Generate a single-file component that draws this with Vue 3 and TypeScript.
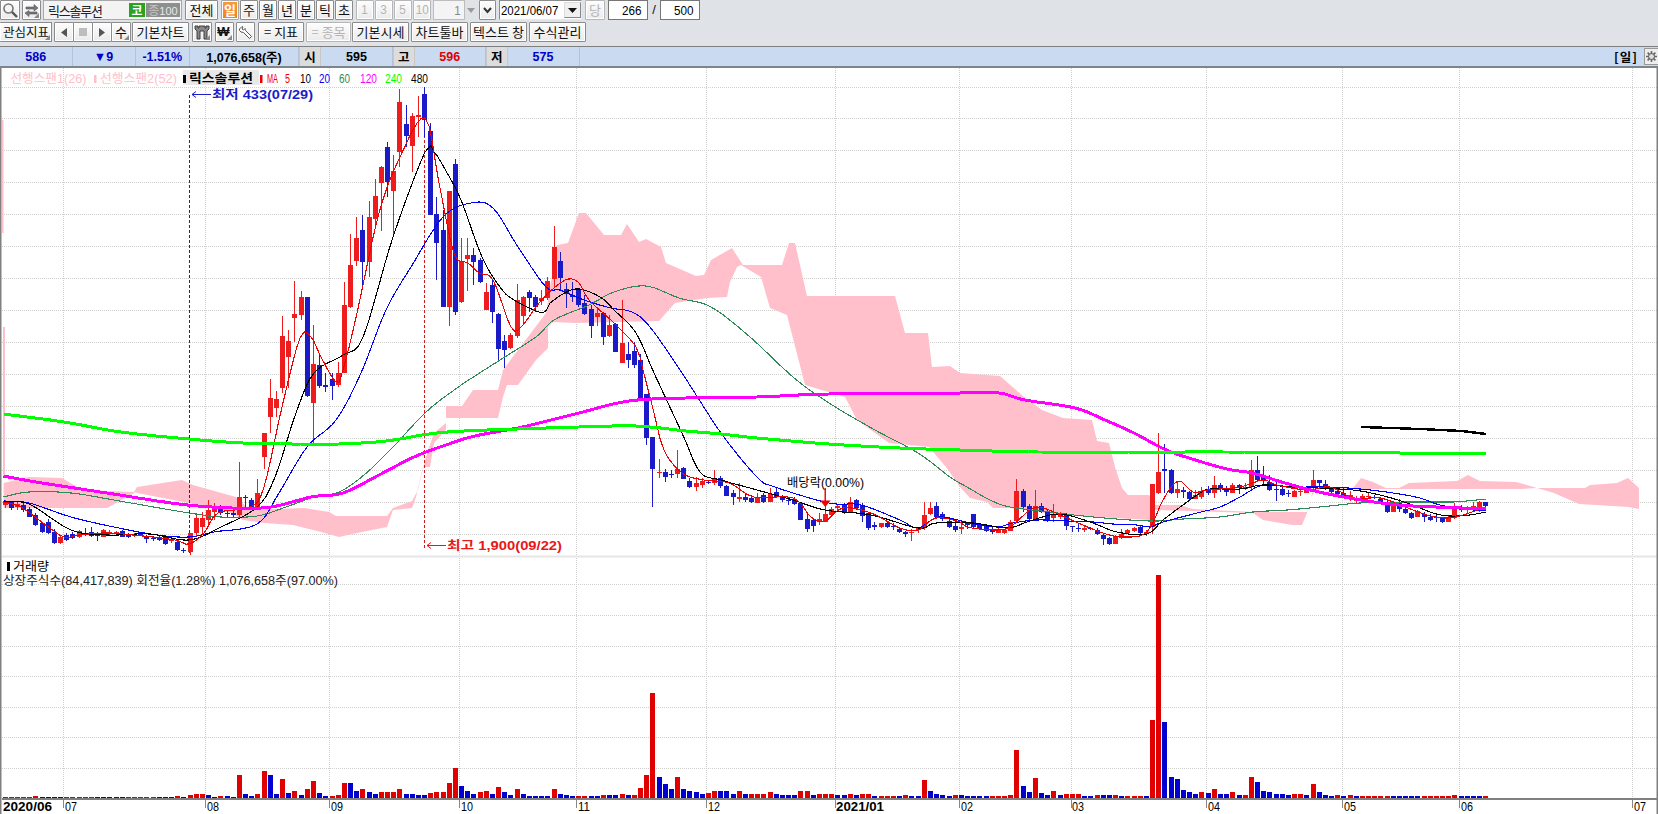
<script setup lang="ts">
type Row = [number, number, number, number, number]
const X = (i: number) => 4.5 + 6.17 * i

const seg1: Row[] = [
  [1,1262,1275,1260,1285],[0,1265,1285,1262,1290],[1,1272,1282,1265,1290],[0,1275,1290,1268,1297],[0,1288,1310,1280,1312],
  [0,1305,1335,1300,1338],[0,1330,1355,1325,1360],[0,1325,1358,1318,1362],[0,1355,1390,1348,1392],[1,1370,1390,1365,1392],
  [0,1365,1380,1360,1382],[0,1362,1375,1355,1378],[1,1353,1372,1350,1374],[0,1358,1362,1345,1368],[0,1355,1367,1342,1370],
  [0,1364,1367,1355,1382],[1,1350,1370,1348,1372],[1,1355,1362,1350,1365],[1,1355,1362,1352,1365],[0,1352,1370,1350,1372],
  [0,1365,1370,1360,1373],[1,1362,1367,1358,1370],[0,1358,1365,1355,1368],[0,1370,1377,1365,1390],[0,1374,1377,1368,1382],
  [0,1372,1380,1368,1383],[0,1368,1392,1365,1395],[1,1378,1383,1375,1390],[0,1385,1410,1378,1412],[0,1410,1413,1403,1420],
  [1,1360,1415,1358,1425],[1,1315,1360,1300,1370],[1,1315,1340,1295,1365],[1,1290,1320,1260,1340],[1,1282,1295,1270,1320],
  [0,1285,1300,1275,1305],[0,1298,1302,1290,1312],[0,1300,1305,1292,1312],[1,1252,1305,1145,1310],[0,1250,1254,1245,1290],
  [0,1260,1280,1255,1290],[1,1240,1280,1197,1285],[1,1060,1130,1060,1167],[1,955,1012,897,1060],[1,958,985,932,1010],
  [1,768,925,708,940],[1,783,832,750,925],[1,702,713,603,785],[1,651,705,633,720],[0,651,948,651,950],
  [1,853,968,735,1088],[0,855,917,822,925],[0,915,922,880,935],[0,897,917,880,960],[1,880,915,847,920],
  [1,675,880,605,880],[1,556,680,462,685],[1,474,543,410,558],[0,450,545,405,618],[1,411,545,363,590],
  [1,348,416,297,440],[1,261,308,258,452],[0,201,305,186,350],[1,273,333,225,465],[1,66,215,27,260],
  [0,132,168,76,200],[1,108,197,100,276],[1,105,110,48,170],[0,42,120,20,170],[0,153,405,130,405],
  [0,403,488,350,600],[0,450,680,390,680],[1,333,680,333,738],[0,252,695,238,705],[1,543,665,475,670],
  [1,525,537,475,633],[0,525,545,505,615],[0,540,605,535,610],[1,637,690,610,690],[0,615,695,600,728],
  [0,702,806,700,840],[0,783,810,765,865],[1,765,803,760,806],[1,660,767,612,775],[1,650,708,648,735],
  [0,637,653,630,695],[0,650,680,645,695],[1,655,663,630,675],[1,604,655,590,660],[1,501,598,438,620]
]
const seg2: Row[] = [
  [0,183,235,155,270],[0,268,282,250,325],[0,285,290,245,305],[0,270,315,265,320],[0,310,342,285,345],
  [0,327,378,315,415],[1,339,350,320,378],[0,339,410,335,435],[1,375,408,345,410],[0,373,455,370,455],
  [1,430,488,300,488],[0,463,480,425,505],[0,453,495,425,505],[0,480,595,462,595],[0,583,713,583,735],
  [0,710,806,710,920],[1,816,820,777,833],[0,816,830,808,845],[0,821,824,810,835],[1,808,823,750,835],
  [0,803,836,800,838],[0,842,862,835,865],[1,849,860,832,872],[1,842,854,835,865],[0,846,850,840,853],
  [1,837,848,810,855],[0,835,858,828,865],[0,858,888,855,888],[0,878,890,870,915],[1,891,897,850,905],
  [0,892,900,880,905],[0,895,905,885,908],[1,892,908,878,910],[0,885,905,880,910],[1,883,905,865,905],
  [0,876,890,862,893],[0,890,900,885,905],[0,900,903,893,915],[0,898,912,890,915],[0,910,960,905,960],
  [0,958,986,940,995],[0,960,978,955,995],[1,958,965,940,975],[1,942,965,865,965],[1,928,945,920,950],
  [1,918,923,912,935],[0,915,938,910,942],[1,905,935,890,938],[0,900,925,898,930],[0,915,947,910,965],
  [0,940,983,935,990],[0,975,980,965,990],[1,970,982,968,985],[0,968,982,965,985],[0,978,982,970,990],
  [0,987,995,985,998],[0,995,1002,992,1010],[1,997,1000,988,1022],[1,985,990,980,1000],[1,945,985,905,990],
  [1,925,942,905,945],[0,918,950,905,955],[0,943,958,935,962],[0,962,980,960,985],[0,978,990,960,997]
]
const seg3: Row[] = [
  [1,291,296,275,312],[0,278,285,275,297],[0,252,290,252,295],[0,283,297,280,300],[0,287,303,283,305],
  [0,300,307,290,312],[1,297,308,293,310],[1,300,310,298,312],[1,276,302,270,303],[1,183,272,147,275],
  [0,183,232,178,245],[0,228,268,222,270],[1,228,268,180,270],[0,228,247,218,250],[0,246,272,240,275],
  [1,255,265,222,275],[1,255,262,245,268],[0,255,288,250,300],[0,288,292,288,305],[0,295,298,283,305],
  [1,293,300,285,305],[0,295,298,290,300],[0,300,312,295,316],[0,315,327,310,345],[0,323,343,320,345],
  [1,318,342,315,342],[1,312,325,296,328],[1,300,310,298,312],[1,294,303,290,305],[0,291,308,285,318],
  [1,305,313,300,318],[1,162,290,162,312],[1,126,190,8,192],[0,118,122,42,190],[0,120,190,116,192],
  [1,177,188,152,205],[0,180,186,172,205],[0,186,208,182,210],[1,196,206,180,208],[1,183,200,170,208],
  [0,177,190,168,195],[1,165,190,138,203],[0,165,178,160,185],[0,175,187,168,197],
  [1,166,188,158,190],[0,166,175,162,192],[1,172,176,160,180],[1,120,170,90,180],[0,120,150,78,152],
  [0,138,150,108,165],[0,155,180,135,182],[0,177,180,150,213],[0,177,195,168,198],[0,188,193,180,201],
  [1,183,200,180,202],[1,183,187,170,198],[1,178,188,170,190],[1,150,175,120,180],[0,150,158,150,177],
  [0,162,175,150,180],[0,178,185,172,190],[0,183,192,175,195],[0,188,198,175,200],[1,195,201,182,213],
  [1,204,213,198,220],[1,197,205,192,210],[1,197,202,190,207],[0,200,205,195,208],[0,206,216,200,220],
  [0,218,245,214,249],[1,226,246,214,247],[0,216,238,208,246],[0,236,250,232,252],[0,249,263,246,266],
  [1,244,260,240,262],[0,251,262,246,275],[0,260,270,252,272],[0,262,265,256,276],[0,263,275,260,278],
  [1,263,275,256,277],[1,233,265,220,267],[0,238,241,226,247],[1,238,241,228,250],[1,228,240,215,246],
  [1,216,233,213,246],[0,216,228,215,242]
]
const convert = (base: number, rows: Row[]) =>
  rows.map((r) => ({ up: r[0] === 1, top: base + r[1] / 3, bot: base + r[2] / 3, wt: base + r[3] / 3, wb: base + r[4] / 3 }))
const candles = [...convert(80, seg1), ...convert(200, seg2), ...convert(430, seg3)].map((c, i) => ({
  ...c,
  x: Math.round(X(i)),
  h: Math.max(1, c.bot - c.top),
  wh: Math.max(1, c.wb - c.wt)
}))

const vols: number[] = [
  1,1,1,1,1,2,1,1,1,1,1,1,1,1,1,1,1,1,1,1,1,1,1,1,1,1,1,1,2,1,
  3,4,4,3,1,2,2,1,23,4,2,4,27,23,4,19,5,7,3,9,17,5,2,2,3,15,15,7,9,6,
  4,6,6,6,9,4,4,3,3,5,6,6,15,30,12,7,4,6,7,4,11,6,3,9,4,2,2,2,2,9,
  4,3,2,2,2,2,2,3,3,3,4,3,3,10,23,105,21,14,9,21,9,7,6,4,5,7,7,7,4,7,
  4,4,4,4,6,4,3,3,3,7,7,3,4,4,4,3,3,4,3,4,4,2,2,2,2,2,3,2,2,18,
  7,4,3,2,3,3,2,2,2,2,2,2,2,3,48,12,6,20,5,3,7,3,4,4,4,2,2,3,3,3,
  3,2,2,2,2,2,78,223,76,21,19,8,6,4,6,5,9,4,4,6,3,3,21,16,7,6,4,4,3,4,
  4,3,14,6,3,2,3,2,3,2,2,2,2,2,2,2,2,2,2,2,2,2,2,2,2,3,2,2,2,2,2
]
const volBars = vols.map((v, i) => {
  const prev = i ? vols[i - 1] : 0
  const up = v > prev ? true : v < prev ? false : Math.floor(i / 5) % 2 === 0
  return { x: Math.round(X(i)) - 2, y: 798 - v, h: v, up }
})

const hGrid = [...Array.from({ length: 15 }, (_, k) => 86.5 + 31.93 * k), 584, 614.5, 645.5, 675.5, 706.5, 736.5, 767.5].map((y) => Math.round(y) + 0.5)
const vGrid = [63.5, 205.5, 329.5, 459.5, 576.5, 706.5, 835.5, 959.5, 1071.5, 1206.5, 1342.5, 1459.5, 1632.5]
const axisLabels = [
  { t: '2020/06', x: 3, w: 49, bold: true },
  { t: '07', x: 65, w: 12 }, { t: '08', x: 207, w: 12 }, { t: '09', x: 331, w: 12 },
  { t: '10', x: 461, w: 12 }, { t: '11', x: 578, w: 12 }, { t: '12', x: 708, w: 12 },
  { t: '2021/01', x: 836, w: 48, bold: true },
  { t: '02', x: 961, w: 12 }, { t: '03', x: 1072, w: 12 }, { t: '04', x: 1208, w: 12 },
  { t: '05', x: 1344, w: 12 }, { t: '06', x: 1461, w: 12 }, { t: '07', x: 1634, w: 12 }
]
const maLegend = [
  { t: 'MA', x: 267, w: 11, c: '#f00000' }, { t: '5', x: 285, w: 5, c: '#f00000' },
  { t: '10', x: 300, w: 11, c: '#000000' }, { t: '20', x: 319, w: 11, c: '#0000ff' },
  { t: '60', x: 339, w: 11, c: '#2e8b57' }, { t: '120', x: 360, w: 17, c: '#ff00ff' },
  { t: '240', x: 385, w: 17, c: '#00ff00' }, { t: '480', x: 411, w: 17, c: '#000000' }
]

const cloudU = '3.6,483 29,477 62,478 82,490 134,492 137,487 182,480 193,485 218,492 236,497 250,510 304,508 329,512 336,516 387,516 393,508 412,501 418,490 425,460 434,433 446,423 446,406 462,406 473,390 498,390 503,370 518,350 546,313 557,245 568,243 579,213 586,213 604,235 621,235 627,224 639,242 646,239 661,247 666,263 696,276 704,275 711,260 732,248 743,265 782,265 789,243 795,243 807,296 895,296 905,333 928,333 932,367 950,366 960,373 1000,376 1025,398 1042,410 1063,418 1092,420 1097,441 1109,443 1115,467 1122,488 1128,495 1149,495 1155,505 1180,505 1193,509 1253,512 1307,512 1311,497 1317,489 1353,488 1361,478 1373,482 1386,488 1399,488 1409,483 1457,481 1468,475 1480,481 1516,482 1537,488 1585,488 1590,485 1617,483 1628,478 1639,488 1639,508'
const cloudL = '3.6,508 107,508 125,498 136,492 137,493 189,503 232,513 243,520 264,523 293,525 321,532 339,537 357,533 387,527 393,510 412,508 416,497 423,467 430,467 434,443 446,430 446,418 498,418 503,397 507,385 518,385 536,360 548,348 548,327 553,322 575,323 659,321 675,303 707,298 727,297 730,282 737,267 741,265 761,277 770,308 787,315 805,385 845,397 857,420 889,443 929,447 946,467 960,487 970,498 987,502 993,508 1010,508 1060,515 1150,520 1155,510 1190,511 1253,513 1263,520 1292,525 1302,525 1307,513 1312,493 1317,489 1520,489 1537,488 1554,493 1579,504 1629,507 1639,509'
const cloud = cloudU + ' ' + cloudL.split(' ').reverse().join(' ')

function smooth(src: string): string {
  const p = src.split(' ').map((s) => s.split(',').map(Number))
  const out: string[] = []
  for (let i = 0; i < p.length - 1; i++) {
    const a = p[Math.max(0, i - 1)]
    const b = p[i]
    const c = p[i + 1]
    const d = p[Math.min(p.length - 1, i + 2)]
    const steps = Math.max(2, Math.round((c[0] - b[0]) / 4))
    for (let s = 0; s < steps; s++) {
      const t = s / steps
      const q = (k: number) =>
        0.5 * (2 * b[k] + (c[k] - a[k]) * t + (2 * a[k] - 5 * b[k] + 4 * c[k] - d[k]) * t * t + (3 * b[k] - a[k] - 3 * c[k] + d[k]) * t * t * t)
      out.push(q(0).toFixed(1) + ',' + q(1).toFixed(1))
    }
  }
  out.push(p[p.length - 1].join(','))
  return out.join(' ')
}

const ma5 = smooth('3.6,502 21,507 43,523 64,537 79,535 107,533 143,536 175,540 189,544 204,533 218,513 250,507 264,487 282,407 300,338 311,337 321,357 336,382 343,370 357,313 379,213 400,157 425,118 439,183 454,253 468,263 479,273 493,280 511,327 521,327 539,303 554,288 568,279 579,283 589,300 614,323 636,347 643,370 654,413 664,450 682,473 704,480 729,483 754,497 793,498 811,517 825,521 843,508 871,513 900,528 918,530 936,518 960,522 967,527 993,530 1010,527 1030,510 1043,508 1067,518 1083,525 1103,533 1123,537 1147,532 1163,500 1178,481 1193,492 1207,490 1240,487 1263,480 1277,485 1307,490 1330,487 1353,498 1380,498 1400,505 1427,515 1447,518 1463,515 1486,507')
const ma10 = smooth('3.6,502 29,504 71,530 107,535 150,534 189,540 221,527 257,507 275,477 296,413 314,373 343,355 363,337 393,237 425,152 434,152 446,171 461,200 482,257 500,287 514,300 543,313 550,303 575,289 600,297 614,310 636,333 654,373 682,433 700,472 721,480 757,490 793,500 825,510 871,515 918,528 936,523 973,523 1007,528 1027,522 1050,515 1067,515 1093,523 1117,532 1147,534 1163,520 1183,505 1200,493 1210,489 1240,489 1263,485 1293,487 1317,488 1353,490 1380,495 1407,503 1433,513 1450,516 1470,515 1486,512')
const ma20 = smooth('3.6,501 29,503 71,517 114,527 157,535 189,537 214,532 257,524 279,493 307,447 336,420 361,373 386,310 411,267 443,217 471,203 493,208 518,247 546,287 560,290 584,300 611,308 632,312 650,327 682,373 721,433 757,477 775,487 829,503 861,505 900,520 918,528 939,517 970,523 997,527 1013,523 1037,520 1067,521 1093,522 1113,524 1137,525 1150,527 1163,522 1197,513 1220,507 1240,497 1263,485 1293,487 1327,487 1360,489 1393,493 1420,498 1440,505 1473,510 1486,510')
const ma60 = smooth('3.6,497 29,492 71,493 125,502 189,513 221,517 257,516 286,507 314,497 339,492 364,475 393,447 425,413 457,388 500,360 536,337 554,320 589,305 614,292 646,286 679,298 711,307 750,337 793,377 829,403 875,430 918,453 950,477 967,487 990,500 1010,507 1050,512 1083,516 1130,520 1157,521 1183,519 1220,517 1253,512 1287,510 1320,507 1360,503 1407,502 1453,502 1467,501 1486,499')
const ma120 = smooth('3.6,476 36,482 107,493 179,504 232,508 271,507 311,497 343,493 379,475 414,457 446,445 475,436 518,428 543,422 579,413 629,401 686,398 757,397 829,394 960,393 999,393 1025,400 1075,408 1105,420 1134,433 1164,449 1189,458 1227,469 1252,473 1285,483 1319,492 1361,500 1399,505 1436,507 1486,509')
const ma240 = smooth('3.6,414 64,422 121,432 189,439 243,443 296,444 339,444 386,441 429,434 464,431 518,429 579,427 636,426 686,431 721,434 757,438 829,444 900,448 960,450 1038,452 1155,452 1235,452 1409,453 1486,453')
const ma480 = '1361,427 1420,429 1462,431 1486,434'

const periods = ['주', '월', '년', '분', '틱', '초']
const minutes = ['1', '3', '5', '10']
const infoCells = [
  { t: '586', w: 72.5, c: 'blue' },
  { t: '▼9', w: 63, c: 'blue' },
  { t: '-1.51%', w: 54.5, c: 'blue' },
  { t: '1,076,658(주)', w: 109, c: 'black' },
  { t: '시', w: 22, c: 'label' },
  { t: '595', w: 72, c: 'black' },
  { t: '고', w: 21.5, c: 'label' },
  { t: '596', w: 71.5, c: 'red' },
  { t: '저', w: 21.5, c: 'label' },
  { t: '575', w: 72, c: 'blue' }
]
</script>

<template>
  <div class="screen">
    <header class="toolbar">
      <div class="row">
        <button class="btn w20">
          <svg width="16" height="16" viewBox="0 0 16 16"><circle cx="6.5" cy="6.5" r="4.5" fill="#f4f4f4" stroke="#777" stroke-width="1.6" /><path d="M10 10 L15 15" stroke="#555" stroke-width="2.4" /></svg>
        </button>
        <button class="btn w19 ml2 tri">
          <svg width="15" height="15" viewBox="0 0 15 15"><path d="M2 6 V4 H10 V1.5 L14 5 L10 8 V6 Z M13 9 V11 H5 V13.5 L1 10 L5 7.5 V9 Z" fill="#777" stroke="#555" stroke-width=".6" /></svg>
        </button>
        <div class="name ml2">
          <span class="name-text">릭스솔루션</span>
          <span class="badge-green">코</span>
          <span class="badge-gray"><span class="dim">종</span>100</span>
        </div>
        <button class="btn w33 ml3">전체</button>
        <button class="btn w18 ml3 on">일</button>
        <button v-for="p in periods" :key="p" class="btn w18 ml1">{{ p }}</button>
        <button v-for="(m, i) in minutes" :key="m" class="btn w18 off" :class="i === 0 ? 'ml3' : 'ml1'"><span class="num">{{ m }}</span></button>
        <div class="spin ml2">
          <span class="spin-val"><span class="num">1</span></span>
          <span class="spin-btn"><svg width="8" height="5" viewBox="0 0 8 5"><path d="M0 0 H8 L4 5 Z" fill="#999" /></svg></span>
        </div>
        <button class="btn w17 ml2">
          <svg width="9" height="7" viewBox="0 0 9 7"><path d="M1 1 L4.5 5 L8 1" fill="none" stroke="#333" stroke-width="2" /></svg>
        </button>
        <div class="date ml3">
          <span class="date-text">2021/06/07</span>
          <span class="date-btn"><svg width="9" height="5" viewBox="0 0 9 5"><path d="M0 0 H9 L4.5 5 Z" fill="#111" /></svg></span>
        </div>
        <button class="btn w20 ml3 off">당</button>
        <div class="count ml3"><span class="num">266</span></div>
        <span class="slash">/</span>
        <div class="count"><span class="num">500</span></div>
      </div>
      <div class="row row2">
        <button class="btn w52 clip tri">관심지표</button>
        <div class="group ml2">
          <button class="btn w19 joined"><svg width="6" height="9" viewBox="0 0 6 9"><path d="M6 0 V9 L0 4.5 Z" fill="#555" /></svg></button>
          <button class="btn w19 joined"><svg width="8" height="8" viewBox="0 0 8 8"><rect width="8" height="8" fill="#bdbdbd" /></svg></button>
          <button class="btn w19 joined"><svg width="6" height="9" viewBox="0 0 6 9"><path d="M0 0 V9 L6 4.5 Z" fill="#555" /></svg></button>
          <button class="btn w20 tri">수</button>
        </div>
        <button class="btn w57 ml1">기본차트</button>
        <button class="btn w20 ml3 tri">
          <svg width="16" height="15" viewBox="0 0 16 15"><path d="M1 1 H4 V3 H5 V1 H11 V3 H12 V1 H15 V4 L13 6 V14 H10 V6 H6 V14 H3 V6 L1 4 Z" fill="#888" stroke="#333" stroke-width=".9" /></svg>
        </button>
        <button class="btn w19 ml3 tri won">₩</button>
        <button class="btn w19 ml2">
          <svg width="15" height="15" viewBox="0 0 15 15"><path d="M1.5 4 L4 1.5 L5 2 L4 4 L5.5 5 L7 3.5 L7.5 5.5 L13.5 11.5 L11.5 13.5 L5.5 7.5 L3 7 L1.5 5.5 Z" fill="#fff" stroke="#555" stroke-width="1" /></svg>
        </button>
        <button class="btn w46 ml3"><span class="eq">=</span>지표</button>
        <button class="btn w45 ml2 off"><span class="eq">=</span>종목</button>
        <button class="btn w57 ml1">기본시세</button>
        <button class="btn w57 ml2">차트툴바</button>
        <button class="btn w57 ml2">텍스트 창</button>
        <button class="btn w57 ml2">수식관리</button>
      </div>
    </header>

    <section class="info">
      <div v-for="c in infoCells" :key="c.t" class="cell" :class="c.c" :style="{ width: c.w + 'px' }">{{ c.t }}</div>
      <div class="info-fill">
        <span class="period">[일]</span>
        <button class="gear">
          <svg width="13" height="13" viewBox="0 0 13 13"><g stroke="#666" stroke-width="1.6"><path d="M6.5 1 V12 M1 6.5 H12 M2.6 2.6 L10.4 10.4 M10.4 2.6 L2.6 10.4" /></g><circle cx="6.5" cy="6.5" r="3" fill="#ddd" stroke="#555" /></svg>
        </button>
      </div>
    </section>

    <svg class="chart" width="1658" height="746" viewBox="0 68 1658 746">
      <g class="grid">
        <line v-for="y in hGrid" :key="'h' + y" x1="2" x2="1657" :y1="y" :y2="y" />
        <line v-for="x in vGrid" :key="'v' + x" :x1="x" :x2="x" y1="68" y2="798" />
      </g>
      <line x1="2" x2="1657" y1="556.5" y2="556.5" stroke="#e6e6e6" stroke-width="2" />

      <rect x="2" y="120" width="1.5" height="113" fill="#ffc0cb" />
      <rect x="3" y="327" width="2" height="150" fill="#ffc0cb" />
      <polygon :points="cloud" fill="#ffc0cb" />

      <line x1="189.5" x2="189.5" y1="95" y2="555" stroke="#1c1cc8" stroke-dasharray="3 2" />
      <line x1="424.5" x2="424.5" y1="120" y2="548" stroke="#d01818" stroke-dasharray="3 2" />

      <g shape-rendering="crispEdges">
        <g v-for="(c, i) in candles" :key="i" :fill="c.up ? '#ee1c1c' : '#1a1ac8'">
          <rect :x="c.x" :y="c.wt" width="1" :height="c.wh" />
          <rect :x="c.x - 2" :y="c.top" width="5" :height="c.h" />
        </g>
      </g>

      <g fill="none" shape-rendering="crispEdges">
        <polyline :points="ma60" stroke="#2e8b57" stroke-width="1.1" />
        <polyline :points="ma20" stroke="#0000ff" stroke-width="1.1" />
        <polyline :points="ma10" stroke="#000" stroke-width="1.1" />
        <polyline :points="ma5" stroke="#f00000" stroke-width="1.1" />
        <polyline :points="ma120" stroke="#ff00ff" stroke-width="3" />
        <polyline :points="ma240" stroke="#00ff00" stroke-width="3" />
        <polyline :points="ma480" stroke="#000" stroke-width="2.4" />
      </g>

      <g shape-rendering="crispEdges">
        <rect v-for="(b, i) in volBars" :key="'b' + i" :x="b.x" :y="b.y" width="5" :height="b.h" :fill="b.up ? '#e00000' : '#0000d0'" />
      </g>

      <text class="t" x="10.5" y="83" fill="#ffc0cb" textLength="76" lengthAdjust="spacingAndGlyphs">선행스팬1(26)</text>
      <rect x="94" y="75" width="2.5" height="8" fill="#ffc0cb" />
      <text class="t" x="100" y="83" fill="#ffc0cb" textLength="77" lengthAdjust="spacingAndGlyphs">선행스팬2(52)</text>
      <rect x="183" y="70" width="76" height="15" fill="#e8e8e8" />
      <rect x="183" y="75" width="3" height="8" fill="#000" />
      <text class="t b" x="189" y="83" fill="#000" textLength="64" lengthAdjust="spacingAndGlyphs">릭스솔루션</text>
      <rect x="260" y="75" width="2.5" height="8" fill="#f00000" />
      <text v-for="m in maLegend" :key="m.t" class="t" :x="m.x" y="83" :fill="m.c" :textLength="m.w" lengthAdjust="spacingAndGlyphs">{{ m.t }}</text>

      <path d="M211 94.5 H192 M196 91.5 L192 94.5 L196 97.5" fill="none" stroke="#1c1cc8" />
      <text class="t b" x="212" y="99" fill="#1c1cc8" textLength="101" lengthAdjust="spacingAndGlyphs">최저 433(07/29)</text>
      <path d="M446 545.5 H427 M431 542.5 L427 545.5 L431 548.5" fill="none" stroke="#e81818" />
      <text class="t b" x="447" y="549.5" fill="#e81818" textLength="115" lengthAdjust="spacingAndGlyphs">최고 1,900(09/22)</text>

      <text class="t" x="787" y="487" fill="#000" textLength="77" lengthAdjust="spacingAndGlyphs">배당락(0.00%)</text>
      <path d="M825 488 V501" stroke="#f00000" />
      <path d="M820 500.5 H830.5 L825.3 507 Z" fill="#f00000" />

      <rect x="7" y="562" width="3" height="9" fill="#000" />
      <text class="t" x="13" y="571" fill="#000" textLength="36" lengthAdjust="spacingAndGlyphs">거래량</text>
      <text class="t" x="3" y="585" fill="#222" textLength="335" lengthAdjust="spacingAndGlyphs">상장주식수(84,417,839) 회전율(1.28%) 1,076,658주(97.00%)</text>

      <rect x="2" y="798" width="1655" height="2" fill="#808080" />
      <line v-for="x in vGrid" :key="'t' + x" :x1="x" :x2="x" y1="800" y2="808" stroke="#888" />
      <text v-for="a in axisLabels" :key="a.t + a.x" class="axis" :class="{ b: a.bold }" :x="a.x" y="811" :textLength="a.w" lengthAdjust="spacingAndGlyphs">{{ a.t }}</text>

      <rect x="0" y="68" width="1.5" height="746" fill="#808080" />
      <rect x="1656.5" y="68" width="1.5" height="746" fill="#808080" />
    </svg>
  </div>
</template>

<style scoped>
.screen {
  width: 1658px;
  height: 814px;
  overflow: hidden;
  background: #fff;
  display: flex;
  flex-direction: column;
  font-family: "Noto Sans CJK KR", "Liberation Sans", sans-serif;
  color: #111;
}
.toolbar {
  height: 46px;
  flex: none;
  background: #dfe2e7;
  box-sizing: border-box;
}
.row {
  display: flex;
  height: 20px;
}
.row2 {
  margin-top: 2px;
}
.btn {
  position: relative;
  box-sizing: border-box;
  height: 20px;
  flex: none;
  padding: 0;
  display: flex;
  align-items: center;
  justify-content: center;
  border: 1px solid #8c8c8c;
  border-radius: 1px;
  background: linear-gradient(#fdfdfd, #ebebeb);
  box-shadow: inset 0 0 0 1px #fff;
  font-family: "Noto Sans CJK KR", "Liberation Sans", sans-serif;
  font-size: 13px;
  line-height: 18px;
  color: #111;
  white-space: nowrap;
}
.w17 { width: 17px; }
.w18 { width: 18px; }
.w19 { width: 19px; }
.w20 { width: 20px; }
.w33 { width: 33px; }
.w45 { width: 45px; }
.w46 { width: 46px; }
.w52 { width: 52px; }
.w57 { width: 57px; }
.ml1 { margin-left: 1px; }
.ml2 { margin-left: 2px; }
.ml3 { margin-left: 3px; }
.on {
  background: linear-gradient(#fb9b3c, #f27f1f);
  color: #fff;
  font-weight: 700;
  border-color: #a8a8a8;
}
.off {
  color: #b4b4b4;
  border-color: #b6b6b6;
}
.tri::after {
  content: "";
  position: absolute;
  right: 1px;
  bottom: 1px;
  border-left: 5px solid transparent;
  border-bottom: 5px solid #8a8a8a;
}
.clip {
  justify-content: flex-end;
  padding-right: 2px;
  border-left: 0;
  font-size: 12.5px;
}
.joined {
  margin-right: -1px;
}
.group {
  display: flex;
}
.group .w19 { width: 20px; }
.won {
  font-family: "Liberation Sans", sans-serif;
  font-weight: 700;
  padding-right: 2px;
}
.eq {
  margin-right: 3px;
}
.num {
  font-family: "Liberation Sans", sans-serif;
  font-size: 13px;
  display: inline-block;
  transform: scaleX(0.9);
}
.name {
  box-sizing: border-box;
  width: 139px;
  height: 20px;
  flex: none;
  display: flex;
  align-items: center;
  background: #f3f3f3;
  border: 1px solid #a8a8a8;
}
.name-text {
  margin-left: 4px;
  width: 81px;
  flex: none;
  font-size: 13px;
  letter-spacing: -1.2px;
  color: #222;
}
.badge-green {
  width: 16px;
  height: 14px;
  flex: none;
  background: #2aa11f;
  color: #fff;
  font-weight: 700;
  font-size: 12px;
  line-height: 14px;
  text-align: center;
}
.badge-gray {
  margin-left: 1px;
  width: 34px;
  height: 14px;
  flex: none;
  background: #8f8f8f;
  color: #e8e8e8;
  font-family: "Liberation Sans", sans-serif;
  font-size: 11px;
  line-height: 14px;
  text-align: center;
}
.dim {
  font-family: "Noto Sans CJK KR", sans-serif;
  color: #c4c4c4;
  font-size: 12px;
}
.spin {
  display: flex;
  width: 44px;
  height: 20px;
  flex: none;
}
.spin-val {
  box-sizing: border-box;
  width: 32px;
  background: #f4f4f4;
  border: 1px solid #bdbdbd;
  display: flex;
  align-items: center;
  justify-content: flex-end;
  padding-right: 3px;
  color: #8a8a8a;
}
.spin-btn {
  width: 12px;
  display: flex;
  align-items: center;
  justify-content: center;
}
.date {
  box-sizing: border-box;
  width: 83px;
  height: 20px;
  flex: none;
  display: flex;
  align-items: center;
  justify-content: space-between;
  background: #fff;
  border: 1px solid #8c8c8c;
  border-right-color: #e8e8e8;
  border-bottom-color: #e8e8e8;
  padding: 0 0 0 1px;
}
.date-text {
  font-family: "Liberation Sans", sans-serif;
  font-size: 13px;
  display: inline-block;
  width: 62px;
  white-space: nowrap;
  transform: scaleX(0.88);
  transform-origin: left center;
  color: #000;
}
.date-btn {
  box-sizing: border-box;
  width: 17px;
  height: 16px;
  display: flex;
  align-items: center;
  justify-content: center;
  background: #f0f0f0;
  border: 1px solid #888;
  border-top-color: #ddd;
  border-left-color: #ddd;
}
.count {
  box-sizing: border-box;
  width: 40px;
  height: 20px;
  flex: none;
  display: flex;
  align-items: center;
  justify-content: flex-end;
  padding-right: 4px;
  background: #fff;
  border: 1px solid #777;
  color: #000;
}
.slash {
  width: 12px;
  flex: none;
  text-align: center;
  font-family: "Liberation Sans", sans-serif;
  font-size: 13px;
  line-height: 20px;
}
.info {
  box-sizing: border-box;
  height: 22px;
  flex: none;
  display: flex;
  background: #c9daf1;
  border-top: 1px solid #7f7f7f;
  border-bottom: 2px solid #7c848c;
}
.cell {
  box-sizing: border-box;
  flex: none;
  height: 19px;
  display: flex;
  align-items: center;
  justify-content: center;
  font-family: "Liberation Sans", "Noto Sans CJK KR", sans-serif;
  font-weight: 700;
  font-size: 12.5px;
  border-right: 1px solid #b4c2d6;
}
.blue { color: #0000c8; }
.black { color: #000; }
.red { color: #e00000; }
.label {
  background: #dcdcdc;
  color: #000;
  border-left: 1px solid #c8c8c8;
  border-right: 1px solid #c8c8c8;
}
.info-fill {
  flex: 1;
  display: flex;
  justify-content: flex-end;
  align-items: center;
}
.period {
  font-weight: 700;
  font-size: 12.5px;
  margin-right: 6px;
  color: #000;
  letter-spacing: 1px;
}
.gear {
  box-sizing: border-box;
  width: 14px;
  height: 17px;
  padding: 0;
  display: flex;
  align-items: center;
  background: #eee;
  border: 1px solid #999;
  border-right: 0;
}
.chart {
  display: block;
  flex: none;
}
.grid line {
  stroke: #cfcfcf;
  stroke-dasharray: 1 1;
  shape-rendering: crispEdges;
}
.t {
  font-family: "Liberation Sans", "Noto Sans CJK KR", sans-serif;
  font-size: 12px;
}
.b {
  font-weight: 700;
}
.axis {
  font-family: "Liberation Sans", sans-serif;
  font-size: 13px;
  fill: #000;
}
</style>
